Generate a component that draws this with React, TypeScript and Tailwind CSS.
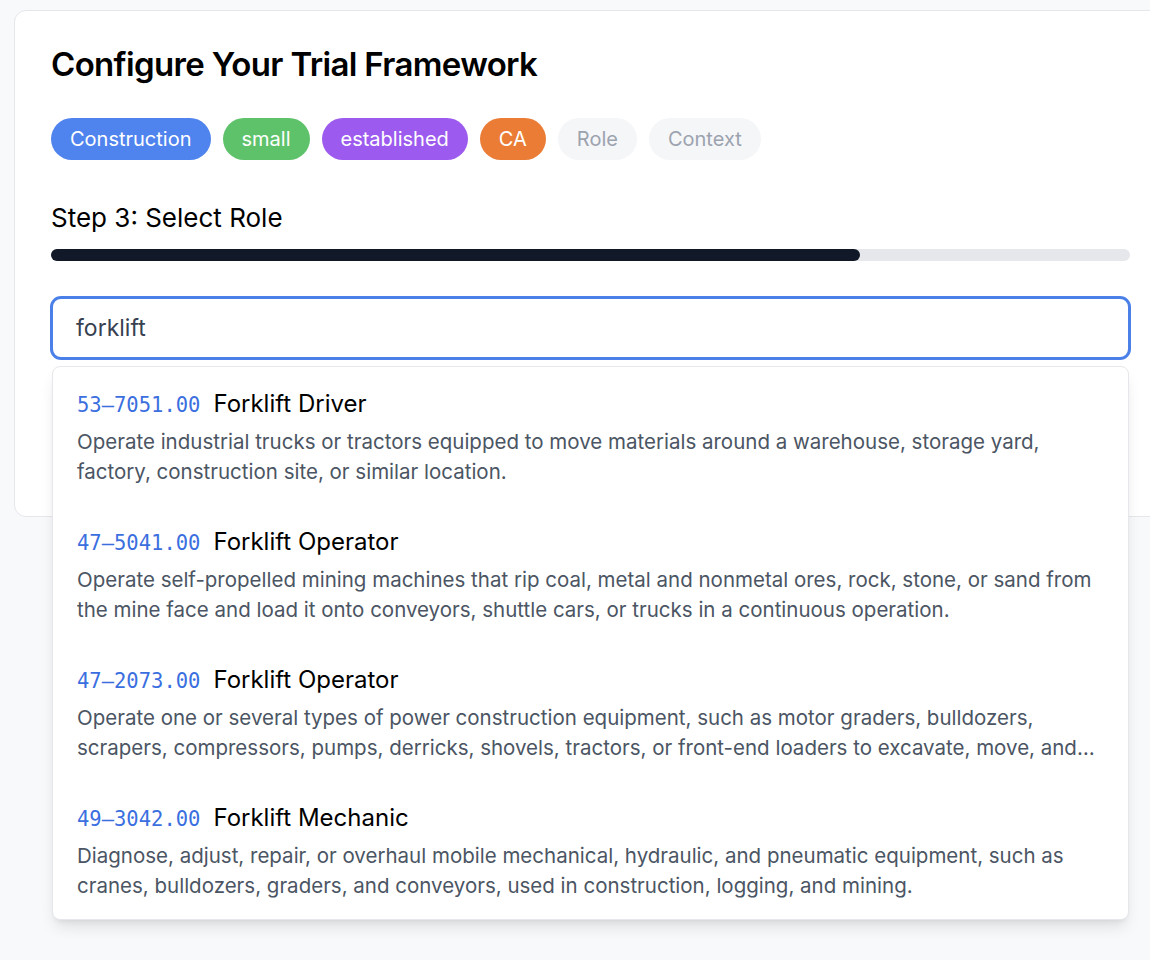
import React from 'react';

const tags = [
  { label: 'Construction', cls: 'bg-[#4f83ee] text-white' },
  { label: 'small', cls: 'bg-[#5ec26b] text-white' },
  { label: 'established', cls: 'bg-[#9c5bee] text-white' },
  { label: 'CA', cls: 'bg-[#ea7c36] text-white' },
  { label: 'Role', cls: 'bg-[#f5f6f8] text-[#9ca3af]' },
  { label: 'Context', cls: 'bg-[#f5f6f8] text-[#9ca3af]' },
];

const results = [
  {
    code: '53-7051.00',
    title: 'Forklift Driver',
    desc: 'Operate industrial trucks or tractors equipped to move materials around a warehouse, storage yard, factory, construction site, or similar location.',
  },
  {
    code: '47-5041.00',
    title: 'Forklift Operator',
    desc: 'Operate self-propelled mining machines that rip coal, metal and nonmetal ores, rock, stone, or sand from the mine face and load it onto conveyors, shuttle cars, or trucks in a continuous operation.',
  },
  {
    code: '47-2073.00',
    title: 'Forklift Operator',
    desc: 'Operate one or several types of power construction equipment, such as motor graders, bulldozers, scrapers, compressors, pumps, derricks, shovels, tractors, or front-end loaders to excavate, move, and grade earth, erect structures, or pour concrete or other hard surfacing.',
  },
  {
    code: '49-3042.00',
    title: 'Forklift Mechanic',
    desc: 'Diagnose, adjust, repair, or overhaul mobile mechanical, hydraulic, and pneumatic equipment, such as cranes, bulldozers, graders, and conveyors, used in construction, logging, and mining.',
  },
];

export default function App() {
  return (
    <div
      className="w-[1150px] h-[960px] overflow-hidden bg-[#f8f9fb] pt-[10px] pl-[14px]"
      style={{ fontFamily: 'Inter, "Noto Sans", sans-serif' }}
    >
      <div className="w-[1153px] h-[507px] bg-white border border-gray-200 rounded-xl pl-[36px] pr-[36px] pt-[32px]">
        <h1 className="text-[33px] leading-[42px] font-semibold tracking-[-0.02em] text-black">
          Configure Your Trial Framework
        </h1>

        {/* chosen values */}
        <div className="flex gap-[12px] mt-[33px]">
          {tags.map((t) => (
            <span
              key={t.label}
              className={`h-[42px] px-[19px] rounded-full flex items-center text-[20px] ${t.cls}`}
            >
              {t.label}
            </span>
          ))}
        </div>

        <div className="mt-[42px] text-[26px] leading-[32px] text-black">Step 3: Select Role</div>

        <div className="mt-[15px] h-[12px] w-full rounded-full bg-[#e5e7eb]">
          <div className="h-full w-[75%] rounded-full bg-[#111827]" />
        </div>

        {/* search box with results */}
        <div className="relative mt-[35px] -ml-px -mr-px">
          <div className="h-[64px] rounded-[11px] border-[3px] border-[#4a80e8] flex items-center px-[23px] text-[23px] text-[#374151]">
            forklift
          </div>

          <div className="absolute left-[2px] right-[2px] top-[70px] bg-white border border-gray-200 rounded-lg shadow-lg z-10">
            {results.map((r, i) => (
              <div key={i} className="px-[24px] pt-[19px] pb-[18px]">
                <div className="flex items-baseline h-[36px] leading-[36px]">
                  <span
                    className="text-[20.5px] text-[#3b6fe0]"
                    style={{ fontFamily: '"DejaVu Sans Mono", monospace' }}
                  >
                    {r.code.replace('-', '\u2013')}
                  </span>
                  <span className="ml-[13px] text-[24px] text-black">{r.title}</span>
                </div>
                <p className="mt-[5px] text-[20.5px] leading-[30px] text-[#4b5563] line-clamp-2">
                  {r.desc}
                </p>
              </div>
            ))}
          </div>
        </div>
      </div>
    </div>
  );
}
